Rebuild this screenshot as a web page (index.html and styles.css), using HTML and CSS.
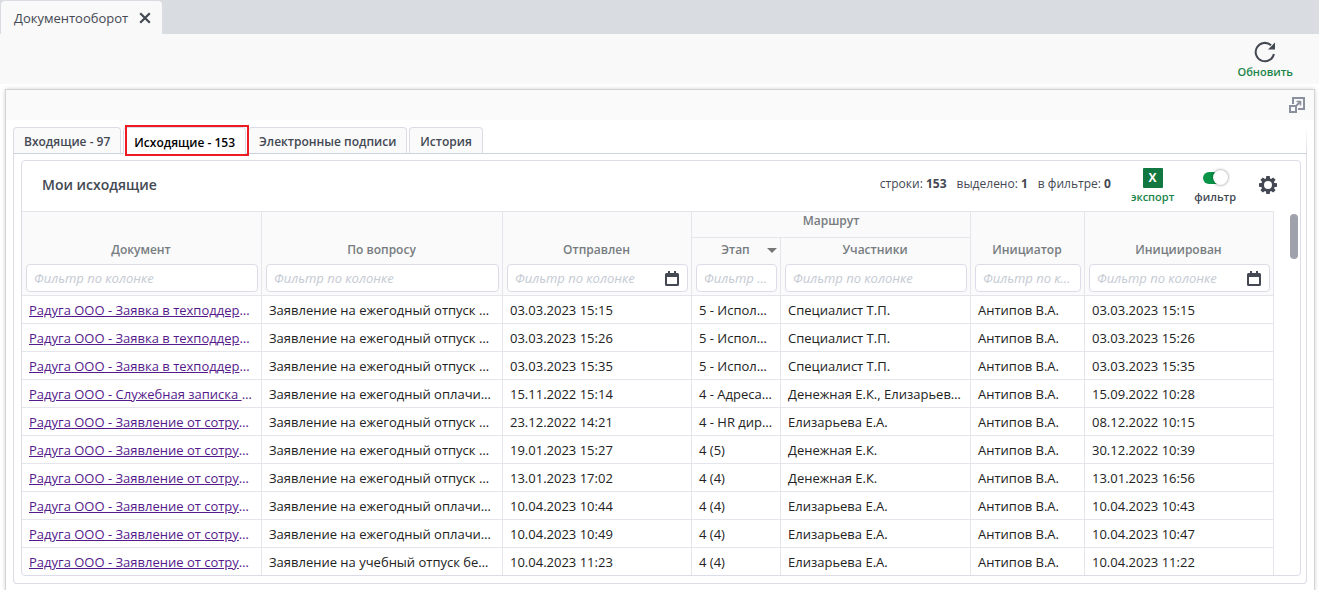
FILE: index.html
```html
<!DOCTYPE html>
<html lang="ru">
<head>
<meta charset="utf-8">
<meta name="viewport" content="width=device-width, initial-scale=1">
<title>Документооборот</title>
<link rel="stylesheet" href="styles.css">
</head>
<body>
<header class="window-tabs">
  <div class="window-tab">
    <span>Документооборот</span>
    <button class="icon-button" type="button" aria-label="Закрыть">
      <svg width="12" height="12" viewBox="0 0 12 12"><path d="M1.2 1.2l9.6 9.6M10.8 1.2l-9.6 9.6" fill="none" stroke="#434853" stroke-width="2.2"/></svg>
    </button>
  </div>
</header>
<div class="toolbar">
  <button class="tool tool-green" type="button">
    <svg width="22" height="22" viewBox="0 0 22 22"><path d="M19.9 13A9.200 9.200 0 1 1 17 4.200" fill="none" stroke="#434853" stroke-width="2"/><path d="M21 1.500v7h-7z" fill="#434853"/></svg>
    <span>Обновить</span>
  </button>
</div>
<main class="panel">
  <div class="panel-bar">
    <button class="icon-button" type="button" aria-label="Развернуть">
      <svg width="16" height="16" viewBox="0 0 16 16" fill="none" stroke="#8b909e" stroke-width="2"><path d="M4 7V1h11v11H9"/><path d="M1 9h6v6H1z"/><path d="M7.500 8.500L11 5" stroke-width="1.800"/><path d="M7.500 4.500h4v4" stroke-width="1.600"/></svg>
    </button>
  </div>
  <div class="panel-body">
    <nav class="tabs">
      <button class="tab" type="button">Входящие - 97</button>
      <button class="tab tab-active" type="button">Исходящие - 153</button>
      <button class="tab" type="button">Электронные подписи</button>
      <button class="tab" type="button">История</button>
    </nav>
    <section class="tab-content">
      <div class="grid">
        <div class="grid-header">
          <h1 class="grid-title">Мои исходящие</h1>
          <div class="stats">
            <span>строки: <b>153</b></span>
            <span>выделено: <b>1</b></span>
            <span>в фильтре: <b>0</b></span>
          </div>
          <button class="tool tool-green tool-export" type="button">
            <span class="excel">X</span>
            <span>экспорт</span>
          </button>
          <label class="tool tool-filter">
            <input class="switch" type="checkbox" role="switch" checked>
            <span>фильтр</span>
          </label>
          <button class="icon-button" type="button" aria-label="Настройки">
            <svg width="20" height="20" viewBox="0 0 20 20"><g fill="#434853"><path fill-rule="evenodd" d="M10 3.200a6.800 6.800 0 1 1 0 13.600a6.800 6.800 0 0 1 0-13.600zM10 6a4 4 0 1 0 0 8a4 4 0 0 0 0-8z"/><path id="teeth" d="M8.300 1h3.400l.6 4h-4.600zM8.300 19h3.400l.6-4h-4.600z"/><use href="#teeth" transform="rotate(45 10 10)"/><use href="#teeth" transform="rotate(90 10 10)"/><use href="#teeth" transform="rotate(135 10 10)"/></g></svg>
          </button>
        </div>
        <div class="grid-body">
          <table class="data">
            <colgroup>
              <col class="col-document"><col><col class="col-date"><col class="col-stage"><col class="col-people"><col class="col-author"><col class="col-date">
            </colgroup>
            <thead>
              <tr class="group-row">
                <th rowspan="2"><div class="caption">Документ</div><input class="filter" type="text" placeholder="Фильтр по колонке" aria-label="Документ"></th>
                <th rowspan="2"><div class="caption">По вопросу</div><input class="filter" type="text" placeholder="Фильтр по колонке" aria-label="По вопросу"></th>
                <th rowspan="2"><div class="caption">Отправлен</div><div class="filter filter-date"><input type="text" placeholder="Фильтр по колонке" aria-label="Отправлен"><button class="icon-button" type="button" aria-label="Календарь"><svg width="14" height="15" viewBox="0 0 14 15"><path fill="#434853" fill-rule="evenodd" d="M3 0h2v2h4V0h2v2h1.500Q14 2 14 3.500v10q0 1.500-1.500 1.500h-11Q0 15 0 13.500v-10Q0 2 1.500 2H3zM2 6v7h10V6z"/></svg></button></div></th>
                <th class="group" colspan="2">Маршрут</th>
                <th rowspan="2"><div class="caption">Инициатор</div><input class="filter" type="text" placeholder="Фильтр по колонке" aria-label="Инициатор"></th>
                <th rowspan="2"><div class="caption">Инициирован</div><div class="filter filter-date"><input type="text" placeholder="Фильтр по колонке" aria-label="Инициирован"><button class="icon-button" type="button" aria-label="Календарь"><svg width="14" height="15" viewBox="0 0 14 15"><path fill="#434853" fill-rule="evenodd" d="M3 0h2v2h4V0h2v2h1.500Q14 2 14 3.500v10q0 1.500-1.500 1.500h-11Q0 15 0 13.500v-10Q0 2 1.500 2H3zM2 6v7h10V6z"/></svg></button></div></th>
              </tr>
              <tr class="caption-row">
                <th><div class="caption caption-sorted">Этап</div><input class="filter" type="text" placeholder="Фильтр по колонке" aria-label="Этап"></th>
                <th><div class="caption">Участники</div><input class="filter" type="text" placeholder="Фильтр по колонке" aria-label="Участники"></th>
              </tr>
            </thead>
            <tbody>
              <tr><td><a href="#">Радуга ООО - Заявка в техподдер</a>…</td><td>Заявление на ежегодный отпуск …</td><td>03.03.2023 15:15</td><td>5 - Испол…</td><td>Специалист Т.П.</td><td>Антипов В.А.</td><td>03.03.2023 15:15</td></tr>
              <tr><td><a href="#">Радуга ООО - Заявка в техподдер</a>…</td><td>Заявление на ежегодный отпуск …</td><td>03.03.2023 15:26</td><td>5 - Испол…</td><td>Специалист Т.П.</td><td>Антипов В.А.</td><td>03.03.2023 15:26</td></tr>
              <tr><td><a href="#">Радуга ООО - Заявка в техподдер</a>…</td><td>Заявление на ежегодный отпуск …</td><td>03.03.2023 15:35</td><td>5 - Испол…</td><td>Специалист Т.П.</td><td>Антипов В.А.</td><td>03.03.2023 15:35</td></tr>
              <tr><td><a href="#">Радуга ООО - Служебная записка </a>…</td><td>Заявление на ежегодный оплачи…</td><td>15.11.2022 15:14</td><td>4 - Адреса…</td><td>Денежная Е.К., Елизарьев…</td><td>Антипов В.А.</td><td>15.09.2022 10:28</td></tr>
              <tr><td><a href="#">Радуга ООО - Заявление от сотру</a>…</td><td>Заявление на ежегодный отпуск …</td><td>23.12.2022 14:21</td><td>4 - HR дир…</td><td>Елизарьева Е.А.</td><td>Антипов В.А.</td><td>08.12.2022 10:15</td></tr>
              <tr><td><a href="#">Радуга ООО - Заявление от сотру</a>…</td><td>Заявление на ежегодный отпуск …</td><td>19.01.2023 15:27</td><td>4 (5)</td><td>Денежная Е.К.</td><td>Антипов В.А.</td><td>30.12.2022 10:39</td></tr>
              <tr><td><a href="#">Радуга ООО - Заявление от сотру</a>…</td><td>Заявление на ежегодный отпуск …</td><td>13.01.2023 17:02</td><td>4 (4)</td><td>Денежная Е.К.</td><td>Антипов В.А.</td><td>13.01.2023 16:56</td></tr>
              <tr><td><a href="#">Радуга ООО - Заявление от сотру</a>…</td><td>Заявление на ежегодный оплачи…</td><td>10.04.2023 10:44</td><td>4 (4)</td><td>Елизарьева Е.А.</td><td>Антипов В.А.</td><td>10.04.2023 10:43</td></tr>
              <tr><td><a href="#">Радуга ООО - Заявление от сотру</a>…</td><td>Заявление на ежегодный оплачи…</td><td>10.04.2023 10:49</td><td>4 (4)</td><td>Елизарьева Е.А.</td><td>Антипов В.А.</td><td>10.04.2023 10:47</td></tr>
              <tr><td><a href="#">Радуга ООО - Заявление от сотру</a>…</td><td>Заявление на учебный отпуск бе…</td><td>10.04.2023 11:23</td><td>4 (4)</td><td>Елизарьева Е.А.</td><td>Антипов В.А.</td><td>10.04.2023 11:22</td></tr>
            </tbody>
          </table>
          <div class="scroll-track"><div class="scroll-thumb"></div></div>
        </div>
      </div>
    </section>
  </div>
</main>
</body>
</html>
```

FILE: styles.css
```css
* { box-sizing: border-box; }

body {
  margin: 0;
  min-height: 100vh;
  display: flex;
  flex-direction: column;
  background: #fff;
  color: #434853;
  font: 13px/20px "Open Sans", "Noto Sans", sans-serif;
}

button, input { font: inherit; color: inherit; }

button {
  margin: 0;
  padding: 0;
  border: 0;
  background: none;
  cursor: pointer;
}

svg { display: block; }

.icon-button { display: flex; flex: none; }

/* Window tabs and toolbar */
.window-tabs {
  display: flex;
  padding: 1px 1px 0;
  background: #d9dce1;
}

.window-tab {
  display: flex;
  align-items: center;
  gap: 11px;
  height: 33px;
  padding: 1px 11px 0 13px;
  border-radius: 4px 4px 0 0;
  background: #f9f9f9;
}

.toolbar {
  display: flex;
  justify-content: flex-end;
  height: 50px;
  padding: 7px 26px 0;
  background: #f9f9f9;
}

.tool {
  display: flex;
  flex-direction: column;
  align-items: center;
  font-size: 11px;
  line-height: 16px;
  font-weight: 600;
}

.tool-green { color: #1a8449; }
.toolbar .tool { gap: 1px; }

/* Main panel */
.panel {
  flex: 1;
  display: flex;
  flex-direction: column;
  margin: 5px 4px 0 5px;
  border: 1px solid #d3d3d3;
  border-bottom: 0;
  box-shadow: 0 0 4px rgba(0, 0, 0, .18);
}

.panel-bar {
  display: flex;
  align-items: center;
  justify-content: flex-end;
  height: 30px;
  padding: 0 9px;
  background: #fafafa;
}

.panel-body { padding: 7px 7px 6px; }

.tabs {
  display: flex;
  gap: 2px;
  background: linear-gradient(#fff, #dcdce8) right / 1px 100% no-repeat;
  border-bottom: 1px solid #ccd5db;
}

.tab {
  position: relative;
  height: 26px;
  padding: 3px 10px 0;
  border: 1px solid #dcdce8;
  border-bottom: 0;
  border-radius: 4px 4px 0 0;
  background: #fafafa;
  font-size: 12px;
  font-weight: 600;
}

.tab-active {
  height: 27px;
  margin-bottom: -1px;
  background: #fff;
  color: #000;
}

.tab-active::after {
  content: "";
  position: absolute;
  inset: -3px -4px -2px 1px;
  border: 2px solid #ed1c24;
  z-index: 1;
}

.tab-content {
  padding: 6px 5px 7px 7px;
  border: 1px solid #dcdce8;
  border-top: 0;
  border-radius: 0 0 4px 4px;
}

/* Grid */
.grid {
  border: 1px solid #dcdce8;
  border-radius: 4px;
  overflow: hidden;
}

.grid-header {
  display: flex;
  align-items: center;
  height: 50px;
  padding: 0 22px 2px 20px;
}

.grid-title {
  flex: 1;
  margin: 0;
  font-size: 14px;
  font-weight: 600;
}

.stats {
  display: flex;
  gap: 10px;
  margin-right: 20px;
  padding-bottom: 2px;
  font-size: 12px;
}

.tool-export {
  gap: 1px;
  margin-right: 20px;
  padding-top: 2px;
}

.excel {
  width: 20px;
  height: 20px;
  border-radius: 1px;
  background: #107840;
  color: #fff;
  font-size: 12px;
  line-height: 20px;
  font-weight: 700;
}

.tool-filter {
  gap: 2px;
  margin-right: 22px;
  padding-top: 3px;
}

.switch {
  appearance: none;
  width: 24px;
  height: 12px;
  margin: 3px 0;
  border-radius: 6px;
  background: #0a9447;
}

.switch::before {
  content: "";
  display: block;
  width: 15px;
  height: 15px;
  margin: -2px 0 0 10px;
  border-radius: 50%;
  background: #fff;
  box-shadow: 0 0 3px rgba(0, 0, 0, .5);
}

.grid-body { display: flex; }

.data {
  flex: 1;
  width: 0;
  table-layout: fixed;
  border-spacing: 0;
  border-top: 1px solid #e5e6eb;
}

.col-document { width: 240px; }
.col-date { width: 189px; }
.col-stage { width: 89px; }
.col-people { width: 190px; }
.col-author { width: 114px; }

th, td {
  border-right: 1px solid #e5e6eb;
  border-bottom: 1px solid #e5e6eb;
}

th {
  padding: 0 3px 3px 4px;
  background: #fafafa;
  color: #777c80;
  font-size: 12px;
  font-weight: 600;
  vertical-align: bottom;
}

.group-row { height: 26px; }
.caption-row { height: 58px; }

.group {
  padding: 0;
  line-height: 18px;
  vertical-align: top;
}

.caption { padding: 0 2px 4px 0; }
.caption-sorted { position: relative; }

.caption-sorted::after {
  content: "";
  position: absolute;
  top: 8px;
  right: 0;
  border: 5px solid transparent;
  border-top-color: #777;
  border-bottom: 0;
}

.filter {
  display: block;
  width: 100%;
  height: 28px;
  padding: 0 7px;
  border: 1px solid #dcdce8;
  border-radius: 4px;
  background: #fff;
  font-size: 13px;
  font-weight: 400;
  text-overflow: ellipsis;
}

.filter-date {
  display: flex;
  align-items: center;
  gap: 8px;
  padding-right: 8px;
}

.filter-date input {
  flex: 1;
  min-width: 0;
  padding: 0;
  border: 0;
  background: none;
}

::placeholder {
  color: #c5cad3;
  font-style: italic;
  opacity: 1;
}

td {
  height: 28px;
  padding: 1px 7px 0;
  overflow: hidden;
  color: #222;
  white-space: nowrap;
  text-overflow: ellipsis;
}

tbody tr:last-child td {
  height: 27px;
  border-bottom: 0;
}

td:first-child { color: #551a8b; }
a { color: #551a8b; }

.scroll-track {
  width: 26px;
  padding: 3px 2px 0 16px;
}

.scroll-thumb {
  height: 45px;
  border-radius: 4px;
  background: #a0a2ab;
}
```
